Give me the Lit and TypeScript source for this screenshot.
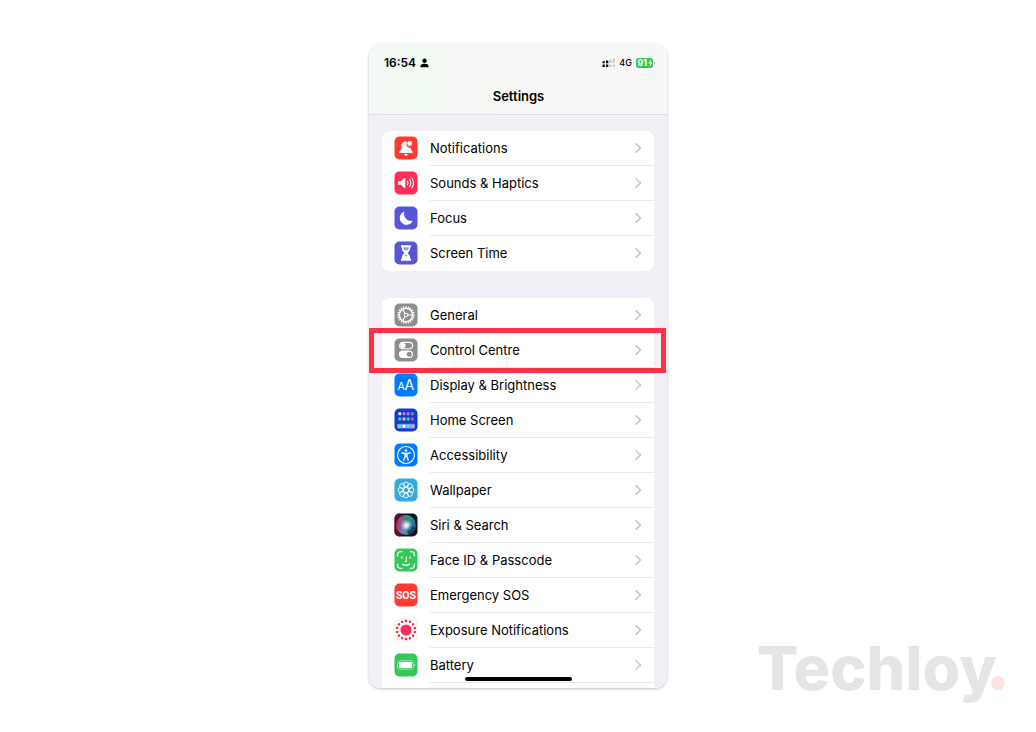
import { LitElement, html, css, svg, nothing, type SVGTemplateResult } from "lit";
import { customElement, property } from "lit/decorators.js";

interface Row {
  label: string;
  icon: string;
  highlighted?: boolean;
}

const alerts: Row[] = [
  { label: "Notifications", icon: "bell" },
  { label: "Sounds & Haptics", icon: "sound" },
  { label: "Focus", icon: "moon" },
  { label: "Screen Time", icon: "hourglass" },
];

const system: Row[] = [
  { label: "General", icon: "gear" },
  { label: "Control Centre", icon: "toggles", highlighted: true },
  { label: "Display & Brightness", icon: "letters" },
  { label: "Home Screen", icon: "home" },
  { label: "Accessibility", icon: "person" },
  { label: "Wallpaper", icon: "flower" },
  { label: "Siri & Search", icon: "siri" },
  { label: "Face ID & Passcode", icon: "face" },
  { label: "Emergency SOS", icon: "sos" },
  { label: "Exposure Notifications", icon: "exposure" },
  { label: "Battery", icon: "battery" },
];

const ring = (count: number, draw: (angle: number) => SVGTemplateResult) =>
  Array.from({ length: count }, (_, i) => draw((360 / count) * i));

const appColours = ["#f4e9ff", "#d96fe0", "#d070dc", "#9a8a6a", "#45c0f0", "#ffc83c", "#4cc6b0", "#f0485e"];

const glyphs: Record<string, { fill: string; art: SVGTemplateResult }> = {
  bell: {
    fill: "#ff3b30",
    art: svg`
      <path fill="#fff" d="M11.4 5.2c-2.7.3-3.9 2.3-3.9 4.8 0 3-.6 4.200-2 5.600-.6.6-.4 1.500.5 1.500h12c.9 0 1.100-.9.5-1.500-1.100-1.200-1.700-2.200-1.900-4.100a3.200 3.200 0 0 1-3.700-4.700c-.3-.9-.7-1.500-1.500-1.600z"/>
      <path fill="#fff" d="M10.200 17.900h3.600a1.800 1.800 0 0 1-3.600 0z"/>
      <circle cx="15.700" cy="7.500" r="2.400" fill="#fff"/>`,
  },
  sound: {
    fill: "#ff2d55",
    art: svg`
      <path fill="#fff" d="M4.500 10.200h2.300l3.700-3.300c.4-.3.8-.1.800.4v9.400c0 .5-.4.7-.8.4l-3.700-3.300H4.500a.6.6 0 0 1-.6-.6v-2.400c0-.3.3-.6.6-.6z"/>
      <path fill="none" stroke="#fff" stroke-width="1.100" stroke-linecap="round" d="M13.400 10.200a3.400 3.400 0 0 1 0 3.600M15.600 8.600a6 6 0 0 1 0 6.800M17.800 7.100a8.800 8.800 0 0 1 0 9.800"/>`,
  },
  moon: {
    fill: "#5856d6",
    art: svg`<path fill="#fff" d="M9.700 5.700c.4-.2.700.1.600.5a7 7 0 0 0 7.700 8.700c.4-.1.700.3.500.6a6.900 6.900 0 1 1-8.800-9.800z"/>`,
  },
  hourglass: {
    fill: "#5856d6",
    art: svg`
      <path fill="#fff" d="M7 4.300h10v2h-.8c0 2.900-.8 4.200-2.600 5.700 1.800 1.500 2.600 2.800 2.600 5.700h.8v2H7v-2h.8c0-2.900.8-4.200 2.600-5.700-1.800-1.500-2.600-2.800-2.600-5.700H7z"/>
      <path fill="#5856d6" d="M9.200 6.300h5.600c-.1 1.400-.4 2.200-.9 2.900h-3.800c-.5-.7-.8-1.500-.9-2.900zM12 13.200l1.600 1.500-1.600.9-1.600-.9z" opacity=".6"/>`,
  },
  gear: {
    fill: "#8e8e90",
    art: svg`
      ${ring(20, (a) => svg`<path stroke="#fff" stroke-width="1.300" d="M12 3.200v2" transform="rotate(${a} 12 12)"/>`)}
      <circle cx="12" cy="12" r="6.600" fill="none" stroke="#fff" stroke-width="1.400"/>
      <circle cx="12" cy="12" r="1.800" fill="none" stroke="#fff"/>
      ${ring(3, (a) => svg`<path stroke="#fff" stroke-width="1.100" d="M13.800 12h4.700" transform="rotate(${a} 12 12)"/>`)}`,
  },
  toggles: {
    fill: "#8e8e90",
    art: svg`
      <rect x="5.600" y="4.400" width="13" height="6.400" rx="3.200" fill="none" stroke="#fff" stroke-width="1.100"/>
      <circle cx="8.900" cy="7.600" r="2.700" fill="#fff"/>
      <rect x="5" y="12.600" width="14" height="7.400" rx="3.700" fill="#fff"/>
      <circle cx="15.300" cy="16.300" r="2.500" fill="#8e8e90"/>`,
  },
  letters: {
    fill: "#007aff",
    art: svg`
      <text class="glyph" x="3.500" y="17" font-size="10.500">A</text>
      <text class="glyph" x="10.400" y="17" font-size="14">A</text>`,
  },
  home: {
    fill: "#0f3bd2",
    art: svg`
      ${appColours.map((c, i) => svg`<rect x=${4.3 + (i % 4) * 4.2} y=${4.300 + Math.floor(i / 4) * 5.3} width="2.900" height="2.900" rx=".6" fill=${c}/>`)}
      <rect x="3" y="15.800" width="18" height="4.800" rx="1" fill="#6f97ea"/>
      <path fill="#7ceb95" d="M4.300 16.700h3v3h-3z"/><path fill="#fff" d="M8.500 16.700h3v3h-3z"/>
      <path fill="#6fd0fa" d="M12.700 16.700h3v3h-3z"/><path fill="#f79a9c" d="M16.900 16.700h3v3h-3z"/>`,
  },
  person: {
    fill: "#007aff",
    art: svg`
      <circle cx="12" cy="12" r="8.500" fill="none" stroke="#fff" stroke-width="1.100"/>
      <circle cx="12" cy="7.500" r="1.300" fill="#fff"/>
      <path fill="none" stroke="#fff" stroke-width="1.300" stroke-linecap="round" stroke-linejoin="round" d="M7.700 9.900l3.200.6h2.200l3.200-.6M11.200 10.600v2.600l-1.500 4M12.800 10.600v2.600l1.500 4"/>
      <path fill="#fff" d="M10.800 10h2.400v4h-2.400z"/>`,
  },
  flower: {
    fill: "#37aadc",
    art: svg`
      ${ring(8, (a) => svg`<circle cx="12" cy="6.600" r="2.500" fill="none" stroke="#fff" stroke-width=".9" transform="rotate(${a} 12 12)"/>`)}
      <circle cx="12" cy="12" r="2.700" fill="none" stroke="#fff" stroke-width=".9"/>`,
  },
  siri: {
    fill: "#15141f",
    art: svg`
      <defs>
        <radialGradient id="core"><stop offset="0" stop-color="#fff"/><stop offset=".35" stop-color="#dfe9f5" stop-opacity=".8"/><stop offset="1" stop-color="#5aa" stop-opacity="0"/></radialGradient>
        <linearGradient id="orb" x1="0" y1=".4" x2="1" y2=".6"><stop offset="0" stop-color="#c3205c"/><stop offset=".4" stop-color="#7b7fb0"/><stop offset=".7" stop-color="#2f8f9c"/><stop offset="1" stop-color="#1c4f7e"/></linearGradient>
      </defs>
      <rect x="0.500" y="0.500" width="8" height="23" rx="5" fill="#6b1238" opacity=".7"/>
      <circle cx="12" cy="12" r="10" fill="url(#orb)"/>
      <path d="M7 4.500c5-3 12 0 13.500 5-4-1.500-8 0-13.500-5z" fill="#2f8a63" opacity=".8"/>
      <path d="M12 13c4-1 7 0 9 2-1 4-4 6-7 6.500z" fill="#123a66" opacity=".8"/>
      <circle cx="12.500" cy="12.500" r="6.500" fill="url(#core)"/>`,
  },
  face: {
    fill: "#34c759",
    art: svg`
      <path fill="none" stroke="#fff" stroke-width="1.100" stroke-linecap="round" stroke-linejoin="round" d="M3.700 8V6.200a2.500 2.500 0 0 1 2.500-2.500H8M16 3.700h1.800a2.500 2.500 0 0 1 2.500 2.500V8M20.300 16v1.800a2.500 2.500 0 0 1-2.500 2.500H16M8 20.300H6.200a2.500 2.500 0 0 1-2.500-2.500V16M7.900 8.700v1.600M16.100 8.700v1.600M12.300 8.700v4c0 .6-.3.900-.9.900h-.3M8.600 16c2 1.700 4.800 1.700 6.800 0"/>`,
  },
  sos: {
    fill: "#ff3b30",
    art: svg`<text class="glyph narrow" x="12" y="16" font-size="10.500" font-weight="700" text-anchor="middle">SOS</text>`,
  },
  exposure: {
    fill: "#fff",
    art: svg`
      <rect x="1" y="1" width="22" height="22" rx="5" fill="none" stroke="#ececee"/>
      <circle cx="12" cy="12" r="5.600" fill="#ff2d55"/>
      ${ring(14, (a) => svg`<circle cx="12" cy="2.900" r="1.300" fill="#e8304f" transform="rotate(${a} 12 12)"/>`)}`,
  },
  battery: {
    fill: "#34c759",
    art: svg`
      <rect x="3.700" y="7.800" width="15.600" height="8.400" rx="2.200" fill="none" stroke="#b5ecc3" stroke-width=".9"/>
      <rect x="5" y="9.100" width="13" height="5.800" rx="1" fill="#fff"/>
      <path fill="#b5ecc3" d="M20.200 10.500c1.200.4 1.200 2.600 0 3z"/>`,
  },
  privacy: { fill: "#5b8fd8", art: svg`` },
};

const base = css`
  :host {
    box-sizing: border-box;
    font-family: Inter, "Liberation Sans", sans-serif;
    color: #000;
  }
  *,
  *::before {
    box-sizing: border-box;
  }
`;

@customElement("setting-icon")
export class SettingIcon extends LitElement {
  static styles = css`
    :host {
      display: block;
      flex: none;
      width: 24px;
      height: 24px;
    }
    svg {
      display: block;
    }
    .glyph {
      font-family: Inter, sans-serif;
      fill: #fff;
    }
    .narrow {
      font-family: Roboto, sans-serif;
    }
  `;

  @property() name = "";

  render() {
    const glyph = glyphs[this.name];
    return html`<svg width="24" height="24" viewBox="0 0 24 24" aria-hidden="true">
      <rect x="0.500" y="0.500" width="23" height="23" rx="5" fill=${glyph.fill} />
      ${glyph.art}
    </svg>`;
  }
}

@customElement("settings-group")
export class SettingsGroup extends LitElement {
  static styles = [
    base,
    css`
      :host {
        display: block;
        flex: none;
      }
      .list {
        list-style: none;
        margin: 0;
        padding: 0;
        background: #fff;
        border-radius: 8px;
      }
      .row {
        position: relative;
        display: flex;
        align-items: flex-start;
        gap: 12px;
        height: 35px;
        padding: 5px 0 0 12px;
        color: inherit;
        text-decoration: none;
        font-size: 13px;
        line-height: 16px;
      }
      .body {
        flex: 1;
        align-self: stretch;
        display: flex;
        align-items: flex-start;
        justify-content: space-between;
        padding: 4px 12px 0 0;
        border-bottom: 1px solid #e9e9ec;
      }
      .chevron {
        margin-top: 2px;
      }
      .item:last-child .body {
        border-bottom-color: transparent;
      }
      .highlight::before {
        content: "";
        position: absolute;
        z-index: 1;
        inset: -5px -12px -5px -13px;
        border: 5px solid #ff3048;
      }
    `,
  ];

  @property({ attribute: false }) rows: Row[] = [];

  render() {
    return html`<ul class="list">
      ${this.rows.map(
        (row) => html`<li class="item">
          <a class="row ${row.highlighted ? "highlight" : ""}" href="#${row.icon}">
            <setting-icon name=${row.icon}></setting-icon>
            <span class="body">
              <span>${row.label}</span>
              ${row.label
                ? html`<svg class="chevron" width="8" height="12" viewBox="0 0 8 12" aria-hidden="true">
                    <path d="M2 1.800 6.500 6 2 10.200" fill="none" stroke="#c2c2c6" stroke-width="1.400" stroke-linecap="round" stroke-linejoin="round" />
                  </svg>`
                : nothing}
            </span>
          </a>
        </li>`,
      )}
    </ul>`;
  }
}

@customElement("app-root")
export class AppRoot extends LitElement {
  static styles = [
    base,
    css`
      :host {
        position: relative;
        display: flex;
        justify-content: center;
        height: 100vh;
        padding: 44px 16px;
        background: #fff;
        overflow: hidden;
      }
      .phone {
        position: relative;
        display: flex;
        flex-direction: column;
        width: 100%;
        overflow: hidden;
        border-radius: 12px;
        background: #f1f0f6;
      }
      .frame {
        display: flex;
        justify-content: center;
        width: 100%;
        max-width: 298px;
        border-radius: 12px;
        box-shadow: 0 1px 3px rgba(0, 0, 0, 0.25);
      }
      .header {
        flex: none;
        height: 71px;
        padding: 10px 11px 0 15px;
        border-bottom: 1px solid #e0e0e4;
        background: linear-gradient(90deg, #f5f9f6, #f0faf2 15%, #f5f7f5 30%, #f8f8f8);
      }
      .status {
        display: flex;
        align-items: center;
        justify-content: space-between;
        height: 18px;
      }
      .cluster {
        display: flex;
        align-items: center;
        gap: 4px;
      }
      .time {
        font-size: 12px;
        line-height: 18px;
        font-weight: 600;
      }
      .network {
        font-size: 9px;
        line-height: 18px;
        font-weight: 500;
      }
      .title {
        margin: 15px 0 0;
        padding-right: 3px;
        font-size: 13px;
        line-height: 18px;
        font-weight: 600;
        text-align: center;
      }
      .groups {
        display: flex;
        flex-direction: column;
        gap: 27px;
        padding: 16px 13px 0;
      }
      .charge {
        font-family: Inter, sans-serif;
        fill: #fff;
      }
      .indicator {
        position: absolute;
        bottom: 7px;
        left: 50%;
        width: 107px;
        height: 4px;
        margin-left: -53px;
        border-radius: 2px;
        background: #000;
      }
      .watermark {
        position: absolute;
        right: 31px;
        bottom: 28px;
        display: flex;
        align-items: baseline;
        font-size: 61px;
        line-height: 72px;
        font-weight: 800;
        color: #e5e5e5;
      }
      .dot {
        width: 14px;
        height: 14px;
        margin-left: -6px;
        border-radius: 50%;
        background: #ffe2e2;
      }
    `,
  ];

  render() {
    return html`
      <main class="frame">
        <div class="phone">
          <header class="header">
            <div class="status">
              <div class="cluster">
                <span class="time">16:54</span>
                <svg width="9" height="10" viewBox="0 0 9 10" aria-hidden="true">
                  <circle cx="4.500" cy="2.800" r="2.200" />
                  <path d="M.5 9.300V8.200C.5 6.500 2 5.800 4.500 5.800s4 .7 4 2.400v1.100z" />
                </svg>
              </div>
              <div class="cluster">
                <svg width="13" height="10" viewBox="0 0 13 10" aria-hidden="true">
                  <path d="M.500 3.200h2.300v2H.5zM4 2.600h2.300v2.600H4zM.5 6.500h2.300V9H.5zM4 6.500h2.300V9H4z" />
                  <path fill="#c8c8ca" d="M7.500 1.600h2v3.600h-2zM10.800.6h2v4.600h-2zM7.500 6.500h2V9h-2zM10.800 6.500h2V9h-2z" />
                </svg>
                <span class="network">4G</span>
                <svg width="20" height="10" viewBox="0 0 20 10" aria-hidden="true">
                  <rect width="17" height="10" rx="2.500" fill="#34c759" />
                  <path fill="#b5b5b8" d="M18 3c1.500.5 1.500 3.500 0 4z" />
                  <text class="charge" x="1.500" y="8.200" font-size="9" font-weight="700">91</text>
                  <path fill="#fff" d="M15.200 1.200l-3 4.200h2l-.7 3.300 3-4.200h-2z" />
                </svg>
              </div>
            </div>
            <h1 class="title">Settings</h1>
          </header>
          <div class="groups">
            <settings-group .rows=${alerts}></settings-group>
            <settings-group .rows=${[...system, { label: "", icon: "privacy" }]}></settings-group>
          </div>
          <div class="indicator"></div>
        </div>
      </main>
      <div class="watermark">Techloy<span class="dot"></span></div>
    `;
  }
}
